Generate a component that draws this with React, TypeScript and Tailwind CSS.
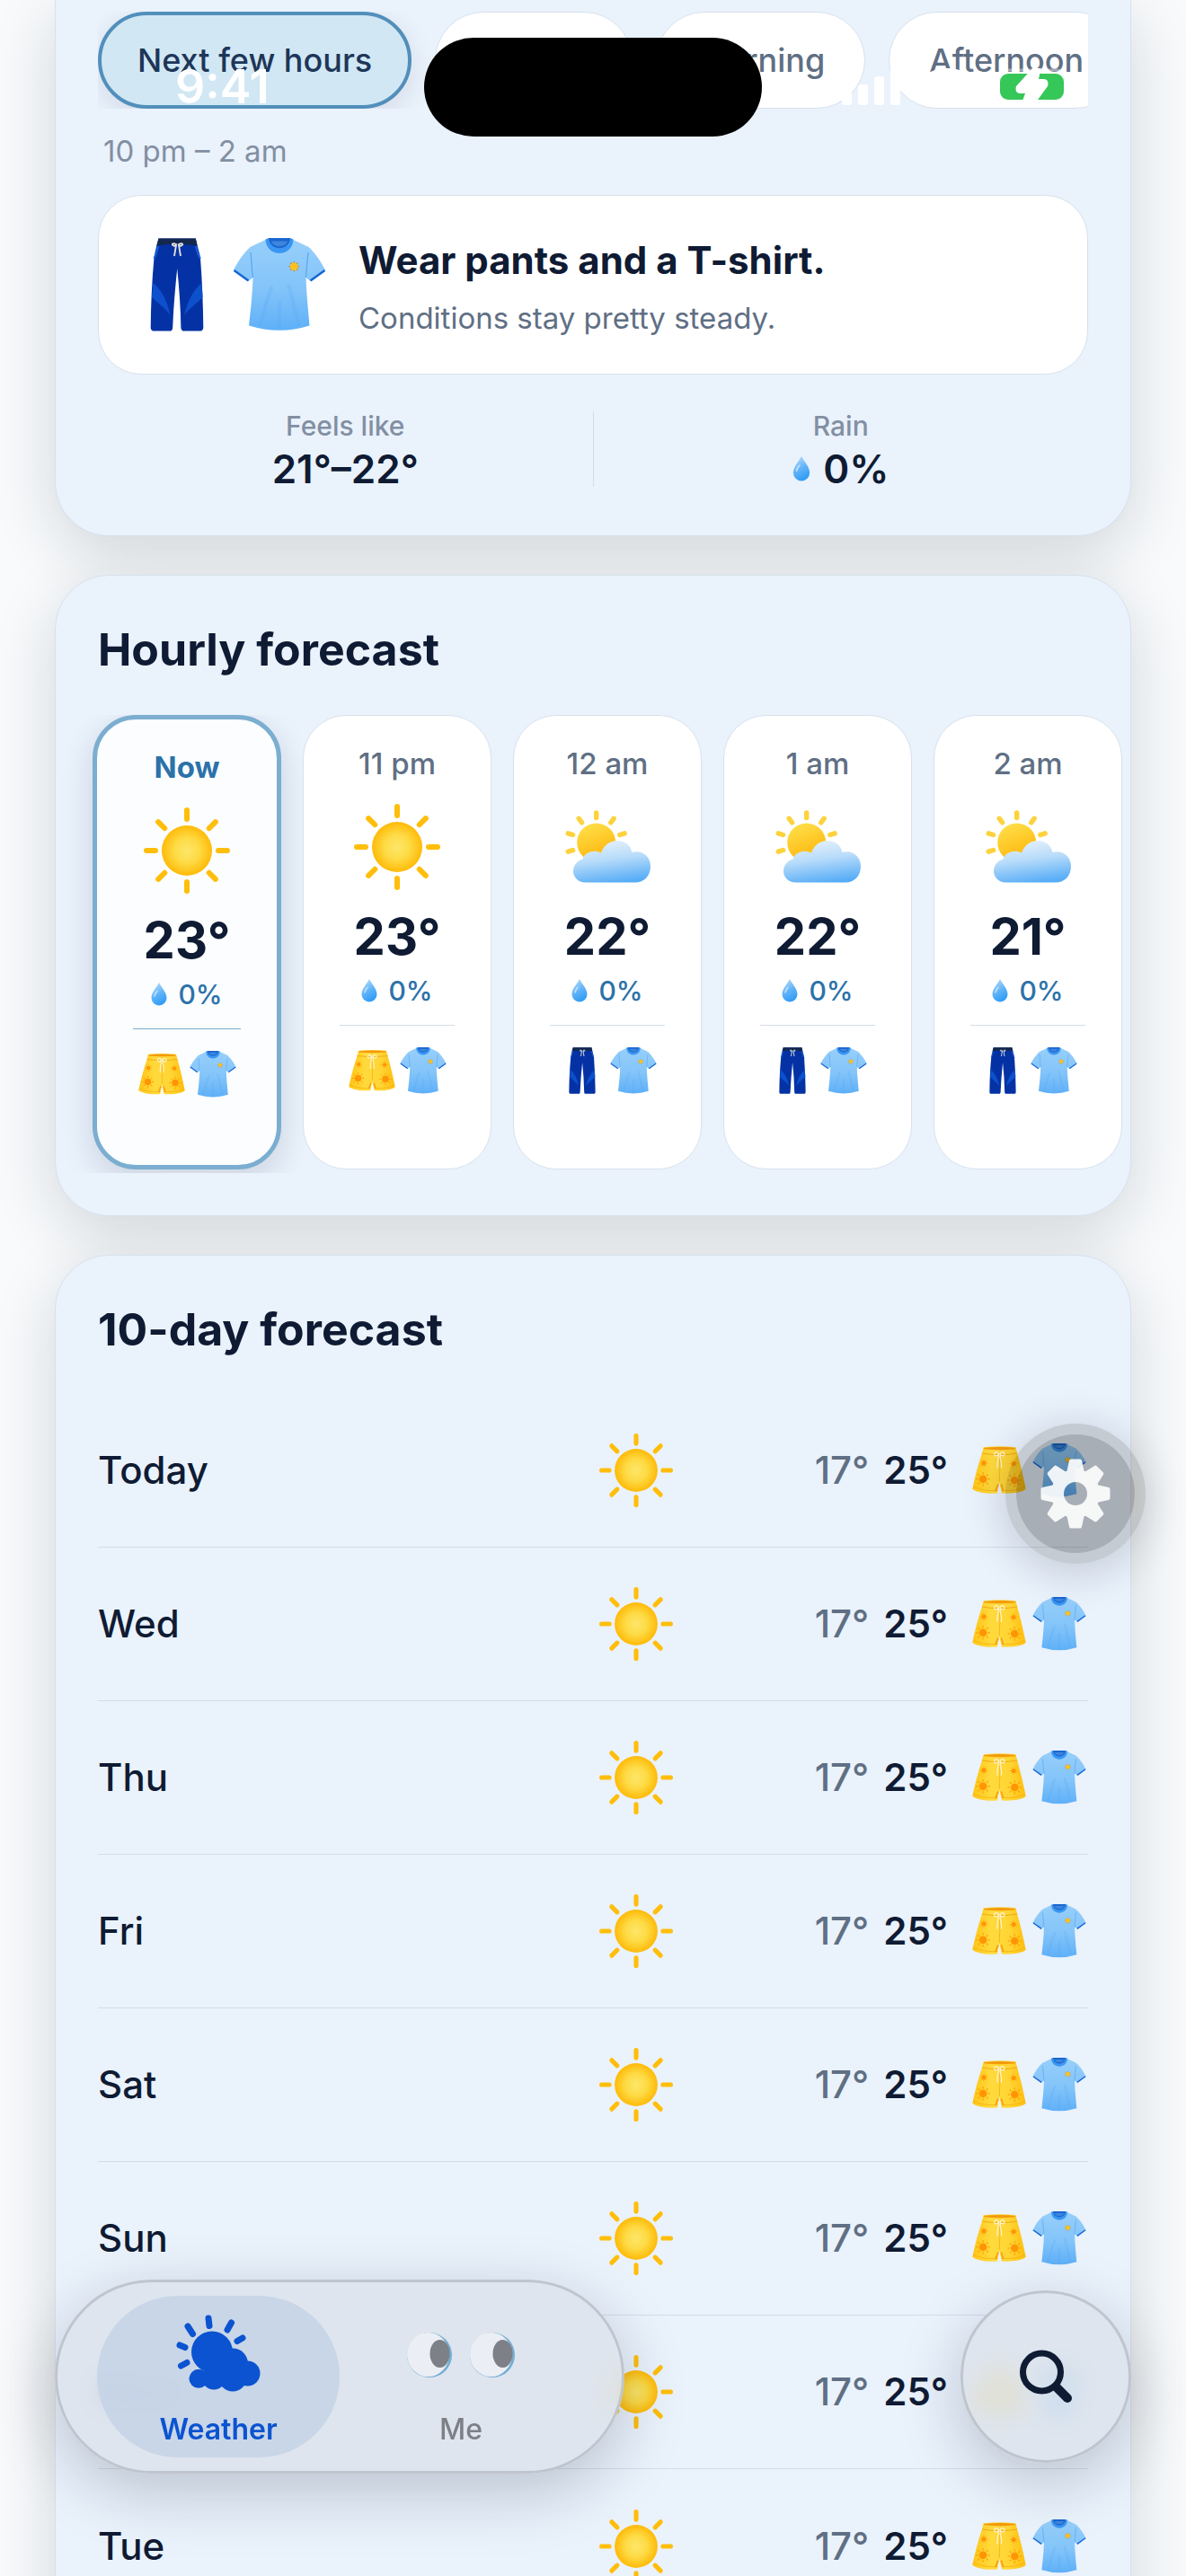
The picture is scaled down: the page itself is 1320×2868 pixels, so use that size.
import type { ReactNode } from 'react';
import clsx from 'clsx';

type Sky = 'sun' | 'partly';
type Bottoms = 'shorts' | 'pants';

const periods = ['Next few hours', 'Tonight', 'Morning', 'Afternoon'];

const hours: { time: string; sky: Sky; temp: number; rain: number; bottoms: Bottoms }[] = [
  { time: 'Now', sky: 'sun', temp: 23, rain: 0, bottoms: 'shorts' },
  { time: '11 pm', sky: 'sun', temp: 23, rain: 0, bottoms: 'shorts' },
  { time: '12 am', sky: 'partly', temp: 22, rain: 0, bottoms: 'pants' },
  { time: '1 am', sky: 'partly', temp: 22, rain: 0, bottoms: 'pants' },
  { time: '2 am', sky: 'partly', temp: 21, rain: 0, bottoms: 'pants' },
];

const days = ['Today', 'Wed', 'Thu', 'Fri', 'Sat', 'Sun', 'Mon', 'Tue'].map((day) => ({
  day,
  low: 17,
  high: 25,
}));

// Gradients shared by every weather and clothing icon
const IconDefs = () => (
  <svg className="absolute h-0 w-0" aria-hidden="true">
    <defs>
      <radialGradient id="sunFill">
        <stop offset="0%" stopColor="#fde66a" />
        <stop offset="50%" stopColor="#fddb45" />
        <stop offset="100%" stopColor="#ffba08" />
      </radialGradient>
      <linearGradient id="sunBehind" x1="0.2" y1="0" x2="0.6" y2="1">
        <stop offset="0%" stopColor="#ffe04a" />
        <stop offset="100%" stopColor="#fdb40a" />
      </linearGradient>
      <linearGradient id="cloudFill" x1="0.3" y1="0" x2="0.55" y2="1">
        <stop offset="0%" stopColor="#e6f1fc" />
        <stop offset="45%" stopColor="#b8dcfa" />
        <stop offset="100%" stopColor="#58adf7" />
      </linearGradient>
      <linearGradient id="dropFill" x1="0.2" y1="0" x2="0.6" y2="1">
        <stop offset="0%" stopColor="#b5dcfb" />
        <stop offset="55%" stopColor="#5eb2f8" />
        <stop offset="100%" stopColor="#2f9bf5" />
      </linearGradient>
      <linearGradient id="shirtFill" x1="0" y1="0" x2="0" y2="1">
        <stop offset="0%" stopColor="#97cffb" />
        <stop offset="55%" stopColor="#83c4f9" />
        <stop offset="100%" stopColor="#5fb0f8" />
      </linearGradient>
      <linearGradient id="shortsFill" x1="0" y1="0" x2="1" y2="0">
        <stop offset="0%" stopColor="#ffc414" />
        <stop offset="35%" stopColor="#ffda3c" />
        <stop offset="70%" stopColor="#ffd534" />
        <stop offset="100%" stopColor="#ffbe0c" />
      </linearGradient>
    </defs>
  </svg>
);

const SunIcon = ({ className }: { className?: string }) => (
  <svg viewBox="0 0 96 96" className={className} aria-hidden="true">
    <circle cx="48" cy="48" r="28" fill="url(#sunFill)" />
    {[0, 45, 90, 135, 180, 225, 270, 315].map((a) => (
      <path key={a} d="M48 3v10" stroke="#ffbe0b" strokeWidth="6" strokeLinecap="round" transform={`rotate(${a} 48 48)`} />
    ))}
  </svg>
);

const PartlyIcon = ({ className }: { className?: string }) => (
  <svg viewBox="0 0 96 96" className={className} aria-hidden="true">
    {[0, 36, 72, -36, -72, -108].map((a) => (
      <path key={a} d="M35.7 10v5.5" stroke="#fdd23c" strokeWidth="5.5" strokeLinecap="round" transform={`rotate(${a} 35.7 43)`} />
    ))}
    <circle cx="35.7" cy="43" r="21.5" fill="url(#sunBehind)" />
    <path
      d="M24 87.5C15 87.5 10 81 10 75C10 68 15 63 20.5 61.5C22 55 32 50 41 54.5C44 46 51 41 59 41C67 41 74 46 75.5 54C87 51 96 59 96 69.5C96 80 89 87.5 79 87.5Z"
      fill="url(#cloudFill)"
    />
  </svg>
);

const DropIcon = ({ className }: { className?: string }) => (
  <svg viewBox="0 0 18 26" className={className} aria-hidden="true">
    <path d="M9 0C11.5 5 17.5 11 17.5 17A8.5 8.5 0 0 1 .5 17C.5 11 6.5 5 9 0Z" fill="url(#dropFill)" />
    <path d="M4 15c.3-2 1.5-4 3-5.5" stroke="#fff" strokeOpacity="0.6" strokeWidth="1.5" strokeLinecap="round" fill="none" />
  </svg>
);

const ShirtIcon = ({ className }: { className?: string }) => (
  <svg viewBox="0 0 104 104" className={className} aria-hidden="true">
    <path
      d="M39.5 .5L19.5 10C12 17 5 27 1 36L17.5 48L22.5 44C22 62 20 80 18 97.5Q52 108 85.5 97.5C84 80 82 62 81.5 44L86.5 48L103 36C99 27 92 17 84.5 10L64.5 .5Z"
      fill="url(#shirtFill)"
    />
    <path d="M22.5 44C21 34 21 25 20 16M81.5 44C82 34 83 25 84 16" stroke="#5aa6ee" strokeWidth="1.2" fill="none" />
    <path d="M30 98C36 80 38 66 44 54M74 98C68 80 67 66 62 52M52 100V70" stroke="#4fa3f3" strokeOpacity="0.2" strokeWidth="4" fill="none" />
    <path d="M1.5 36L17.5 47.5M86.5 47.5L102.5 36" stroke="#1566d6" strokeWidth="2.5" />
    <path d="M36.5 1.5L40 0H64L67.5 1.5C67 22 37 22 36.5 1.5Z" fill="#3a96f2" />
    <path d="M40 0H64C63 15 41 15 40 0Z" fill="#1c66cf" />
    <path d="M43 3.5H61C59 11 45 11 43 3.5Z" fill="#3d86de" />
    {[0, 45, 90, 135].map((a) => (
      <path key={a} d="M68.3 26v11.5" stroke="#c98f2a" strokeWidth="1.5" transform={`rotate(${a} 68.3 31.7)`} />
    ))}
    <circle cx="68.3" cy="31.7" r="4.2" fill="#ffc21a" />
  </svg>
);

const PantsIcon = ({ className }: { className?: string }) => (
  <svg viewBox="0 0 104 104" className={className} aria-hidden="true">
    <path
      d="M31.5 .5H72.8L74.5 7.7C76 14 77.5 18 78 22C80 48 81 74 81.3 100Q81 103 79 103.5H58.5Q56.5 103 56.4 100C56 78 54.5 56 52.2 34C50 56 48 78 47.2 100Q47 103 45.3 103.5H25Q22.7 103 22.7 100C23 74 24 48 26.5 22C27 18 28 14 29.5 7.7Z"
      fill="#0432a4"
    />
    <path d="M25.3 50C33 56 41 68 44.5 86C39 78 30 72 24 66ZM79.5 50C72 56 64 68 60 86C66 78 75 72 80.5 66Z" fill="#0c50cc" />
    <path d="M31 9C30 14 28 20 26.5 23M73 9C74 14 76 20 78 23" stroke="#1660dc" strokeWidth="2" fill="none" />
    <path d="M31.5 .5H72.8L74.6 8.5Q52 5 29.3 8.5Z" fill="#14284e" />
    <path d="M51 7C44 4 47 11 51 8L49 20M54 7C61 4 58 11 54 8L56 20" stroke="#e9e4dc" strokeWidth="1.8" fill="none" />
  </svg>
);

const PrintSun = ({ x, y, r }: { x: number; y: number; r: number }) => (
  <g stroke="#ff9a05" strokeWidth={r / 4}>
    {[0, 45, 90, 135, 180, 225, 270, 315].map((a) => (
      <path key={a} d={`M${x} ${y - r * 1.25}V${y - r * 1.8}`} transform={`rotate(${a} ${x} ${y})`} />
    ))}
    <circle cx={x} cy={y} r={r} fill="#ff9505" stroke="none" />
  </g>
);

const ShortsIcon = ({ className }: { className?: string }) => (
  <svg viewBox="0 0 104 104" className={className} aria-hidden="true">
    <path
      d="M22 7.5Q53 4 84 7.5L87 19C93 40 99 65 103.5 88C98 94 78 98 57 96L52.6 76L48.5 96C30 98 10 95 .5 88C5 65 12 40 19 19Z"
      fill="url(#shortsFill)"
    />
    <path d="M23 8.5Q53 5 83 8.5V11Q53 14 23 11Z" fill="#f39a0c" />
    <path d="M19 19Q53 25 87 19" stroke="#eaa413" strokeWidth="1.5" fill="none" />
    <path d="M52.6 74C52 60 55 45 53 30" stroke="#f0b31c" strokeWidth="1.5" fill="none" />
    <path d="M2 83C15 90 32 92 49 91M57 91C75 92 92 90 102 83" stroke="#f5b211" strokeWidth="1.5" fill="none" />
    <path d="M45 92L50 79M60 92L56 79" stroke="#fb9f08" strokeWidth="3" fill="none" />
    <PrintSun x={22.5} y={38} r={4.5} />
    <PrintSun x={80} y={39} r={4.5} />
    <PrintSun x={21} y={69} r={7.5} />
    <PrintSun x={82} y={71} r={7.5} />
    <path d="M51 19C40 10 40 32 51 21C51 32 47 38 49 48M54 19C65 10 65 32 54 21C54 32 58 38 56 48" stroke="#fff3cf" strokeWidth="2.2" fill="none" />
  </svg>
);

const WeatherTabIcon = () => (
  <svg viewBox="0 0 94 86" className="h-[86px] w-[94px]" aria-hidden="true">
    <g fill="currentColor">
      <circle cx="40" cy="41.5" r="23" />
      <circle cx="63" cy="54.5" r="17" />
      <circle cx="25" cy="71.3" r="10.5" />
      <circle cx="42" cy="70" r="13.5" />
      <circle cx="63" cy="69.5" r="16" />
      <circle cx="79.5" cy="65.5" r="14" />
    </g>
    <path
      d="M36 4L37 12.5M61.5 9L57 17M74 26L68 29.5M13 13L18.5 21.5M4 34L10 36.5M5.5 57L12 53.5"
      stroke="currentColor"
      strokeWidth="7"
      strokeLinecap="round"
    />
  </svg>
);

const EyesIcon = () => (
  <svg viewBox="0 0 120 50" className="h-[50px] w-[120px]" aria-hidden="true">
    {[25, 95].map((cx) => (
      <g key={cx}>
        <circle cx={cx} cy="25" r="25" fill="#74aed2" />
        <ellipse cx={cx - 1.5} cy="24.5" rx="23.5" ry="24.5" fill="#ebeff5" />
        <ellipse cx={cx + 11.5} cy="23.5" rx="11" ry="15.5" fill="#7d8087" />
      </g>
    ))}
  </svg>
);

const GearIcon = () => (
  <svg viewBox="0 0 78 78" className="h-[78px] w-[78px]" aria-hidden="true">
    <defs>
      <mask id="gearHole">
        <rect width="78" height="78" fill="#fff" />
        <circle cx="39" cy="39" r="13" fill="#000" />
      </mask>
    </defs>
    <g mask="url(#gearHole)" fill="#fff" stroke="#fff" strokeWidth="4" strokeLinejoin="round">
      <circle cx="39" cy="39" r="25" />
      {[0, 45, 90, 135, 180, 225, 270, 315].map((a) => (
        <path key={a} d="M34 2.5H44L46.5 14L50 22H28L31.5 14Z" transform={`rotate(${a} 39 39)`} />
      ))}
    </g>
  </svg>
);

const SearchIcon = () => (
  <svg viewBox="0 0 60 60" className="h-[60px] w-[60px]" fill="none" stroke="currentColor" strokeLinecap="round" aria-hidden="true">
    <circle cx="25.5" cy="25" r="21" strokeWidth="7" />
    <path d="M42 42L54 54" strokeWidth="10" />
  </svg>
);

const Outfit = ({ bottoms, size }: { bottoms: Bottoms; size: string }) => (
  <>
    {bottoms === 'shorts' ? <ShortsIcon className={size} /> : <PantsIcon className={size} />}
    <ShirtIcon className={size} />
  </>
);

const Card = ({ className, children }: { className?: string; children: ReactNode }) => (
  <section
    className={clsx(
      'overflow-hidden border border-[#d7e1ec] bg-[#eaf2fc] shadow-[0_20px_70px_rgba(20,30,40,0.16)]',
      className,
    )}
  >
    {children}
  </section>
);

const StatusBar = () => (
  <div className="pointer-events-none absolute inset-x-0 top-0 z-20 grid grid-cols-[1fr_376px_1fr] items-center pt-[42px] text-white">
    <span className="pl-[195px] text-[52px] leading-[60px] font-semibold">9:41</span>
    <div className="h-[110px] rounded-full bg-black" />
    <div className="flex items-center gap-[22px] pl-[88px]">
      <svg viewBox="0 0 66 42" className="h-[42px] w-[66px]" fill="currentColor" aria-hidden="true">
        <rect x="1" y="26" width="11" height="15" rx="3" />
        <rect x="19" y="18" width="11" height="23" rx="3" />
        <rect x="37" y="9" width="11" height="32" rx="3" />
        <rect x="55" y="0" width="11" height="41" rx="3" />
      </svg>
      <svg viewBox="0 0 60 42" className="h-[42px] w-[60px]" fill="none" stroke="currentColor" strokeWidth="7" aria-hidden="true">
        <path d="M3 14Q30-8 57 14M13 25Q30 11 47 25" />
        <circle cx="30" cy="35" r="3" />
      </svg>
      <svg viewBox="0 0 90 42" className="h-[42px] w-[90px]" aria-hidden="true">
        <rect x="2" y="2" width="80" height="38" rx="12" fill="none" stroke="#fff" strokeOpacity="0.4" strokeWidth="3" />
        <rect x="7" y="6" width="71" height="29" rx="9" fill="#36c759" />
        <path d="M45 -2L25 20Q23 27 29 28H35L30 42H44L60 20Q62 13 56 12H50L53 -2Z" fill="#fff" />
      </svg>
    </div>
  </div>
);

const CurrentCard = () => (
  <Card className="rounded-b-[60px] border-t-0 px-[47px] pt-[13px] pb-[50px]">
    <div className="flex gap-[26px] overflow-hidden">
      {periods.map((p, i) => (
        <button
          key={p}
          type="button"
          className={clsx(
            'h-[108px] shrink-0 rounded-full text-[36px] font-medium whitespace-nowrap',
            i === 0
              ? 'border-4 border-[#528fbb] bg-[#d1e7f4] px-10 text-[#1d3658] shadow-[0_8px_30px_rgba(15,23,42,0.1)]'
              : 'border border-[#d7e1ec] bg-white px-11 text-[#5f6f84]',
          )}
        >
          {p}
        </button>
      ))}
    </div>
    <p className="mt-[23px] pl-1.5 text-[33px] leading-[48px] text-[#828fa2]">10 pm – 2 am</p>

    <div className="mt-[25px] flex h-[200px] items-center rounded-[48px] border border-[#d7e1ec] bg-white px-[35px]">
      <div className="flex gap-2.5">
        <Outfit bottoms="pants" size="h-[104px] w-[104px]" />
      </div>
      <div className="ml-9 pt-2">
        <h2 className="text-[42px] leading-[52px] font-bold text-[#0f1b33]">Wear pants and a T-shirt.</h2>
        <p className="mt-3.5 text-[33px] leading-[48px] text-[#5f6f84]">Conditions stay pretty steady.</p>
      </div>
    </div>

    <dl className="mt-[41px] flex items-start text-center">
      <div className="flex-1">
        <dt className="text-[30px] leading-8 font-medium text-[#828fa2]">Feels like</dt>
        <dd className="mt-2 text-[44px] leading-[48px] font-semibold text-[#0f1b33]">21°–22°</dd>
      </div>
      <div className="h-[84px] w-px bg-[#d3ddea]" />
      <div className="flex-1">
        <dt className="text-[30px] leading-8 font-medium text-[#828fa2]">Rain</dt>
        <dd className="mt-2 flex items-center justify-center gap-3.5 text-[44px] leading-[48px] font-semibold text-[#0f1b33]">
          <DropIcon className="h-7 w-5" />
          0%
        </dd>
      </div>
    </dl>
  </Card>
);

const HourlyCard = () => (
  <Card className="rounded-[60px] pt-[52px] pb-[47px]">
    <h2 className="px-[47px] text-[50px] leading-[60px] font-bold text-[#0f1b33]">Hourly forecast</h2>
    <ul className="mt-[43px] flex gap-6 overflow-hidden px-[41px] pb-1">
      {hours.map((h, i) => (
        <li
          key={h.time}
          className={clsx(
            'flex h-[506px] w-[210px] shrink-0 flex-col items-center rounded-[48px] px-10 pt-[31px]',
            i === 0
              ? 'border-[5px] border-[#7baed0] bg-[#fbfdff] shadow-[0_12px_36px_rgba(15,23,42,0.14)]'
              : 'border border-[#d7e1ec] bg-white',
          )}
        >
          <span className={clsx('text-[33px] leading-[44px]', i === 0 ? 'font-bold text-[#2c72a9]' : 'font-medium text-[#5f6f84]')}>
            {h.time}
          </span>
          {h.sky === 'sun' ? <SunIcon className="mt-[23px] h-24 w-24" /> : <PartlyIcon className="mt-[23px] h-24 w-24" />}
          <span className="mt-[22px] text-[56px] leading-[60px] font-bold text-[#0f1b33]">{h.temp}°</span>
          <span className="mt-2.5 flex items-center gap-3 text-[30px] leading-[40px] font-medium text-[#2c72a9]">
            <DropIcon className="h-[26px] w-[18px]" />
            {h.rain}%
          </span>
          <div className={clsx('mt-[18px] h-px w-full', i === 0 ? 'bg-[#7baed0]' : 'bg-[#d3ddea]')} />
          <div className="mt-6 flex gap-[5px]">
            <Outfit bottoms={h.bottoms} size="h-[52px] w-[52px]" />
          </div>
        </li>
      ))}
    </ul>
  </Card>
);

const DailyCard = () => (
  <Card className="rounded-[60px] px-[47px] pt-[52px] pb-[47px]">
    <h2 className="text-[50px] leading-[60px] font-bold text-[#0f1b33]">10-day forecast</h2>
    <ul className="mt-[42px]">
      {days.map((d) => (
        <li
          key={d.day}
          className="grid h-[171px] grid-cols-[1fr_82px_306px_156px] items-center border-b border-[#d3ddea] text-[42px] leading-[60px] last:border-b-0"
        >
          <span className="font-medium text-[#0f1b33]">{d.day}</span>
          <SunIcon className="h-[82px] w-[82px]" />
          <span className="flex justify-end gap-4">
            <span className="font-medium text-[#5f6f84]">{d.low}°</span>
            <span className="font-semibold text-[#0f1b33]">{d.high}°</span>
          </span>
          <span className="flex justify-end gap-[7px] pr-0.5">
            <Outfit bottoms="shorts" size="h-[60px] w-[60px]" />
          </span>
        </li>
      ))}
    </ul>
  </Card>
);

const glass =
  'rounded-full border-[3px] border-[#bfc5ce] bg-[#dce3ec]/88 shadow-[0_20px_70px_rgba(15,23,42,0.22)] backdrop-blur-md';

const BottomBar = () => (
  <div className="absolute inset-x-0 bottom-0 z-10 flex items-center justify-between px-[61px] pb-[114px]">
    <nav className={clsx('flex px-11 py-[15px]', glass)}>
      <a href="#weather" className="flex h-[180px] w-[270px] flex-col items-center rounded-full bg-[#c3d2e6]/80 pt-[21px] text-[#0b53d0]">
        <WeatherTabIcon />
        <span className="mt-5 text-[32px] leading-[44px] font-semibold">Weather</span>
      </a>
      <a href="#me" className="flex h-[180px] w-[270px] flex-col items-center pt-[41px] text-[#7d8087]">
        <EyesIcon />
        <span className="mt-9 text-[32px] leading-[44px] font-medium">Me</span>
      </a>
    </nav>
    <button type="button" aria-label="Search" className={clsx('flex h-[192px] w-[190px] items-center justify-center text-[#0f1b33]', glass)}>
      <SearchIcon />
    </button>
  </div>
);

export default function App() {
  return (
    <div className="relative h-screen overflow-hidden bg-[#f8fafc] font-[Inter,'Liberation_Sans',sans-serif]">
      <IconDefs />
      <StatusBar />
      <main className="flex flex-col gap-[43px] px-[61px]">
        <CurrentCard />
        <HourlyCard />
        <DailyCard />
      </main>
      <button
        type="button"
        aria-label="Settings"
        className="absolute top-[1585px] right-[45px] z-10 flex h-[156px] w-[156px] items-center justify-center rounded-full bg-black/16 shadow-[0_8px_50px_rgba(15,23,42,0.2)]"
      >
        <span className="flex h-[132px] w-[132px] items-center justify-center rounded-full bg-black/14">
          <span className="opacity-90">
            <GearIcon />
          </span>
        </span>
      </button>
      <BottomBar />
    </div>
  );
}
